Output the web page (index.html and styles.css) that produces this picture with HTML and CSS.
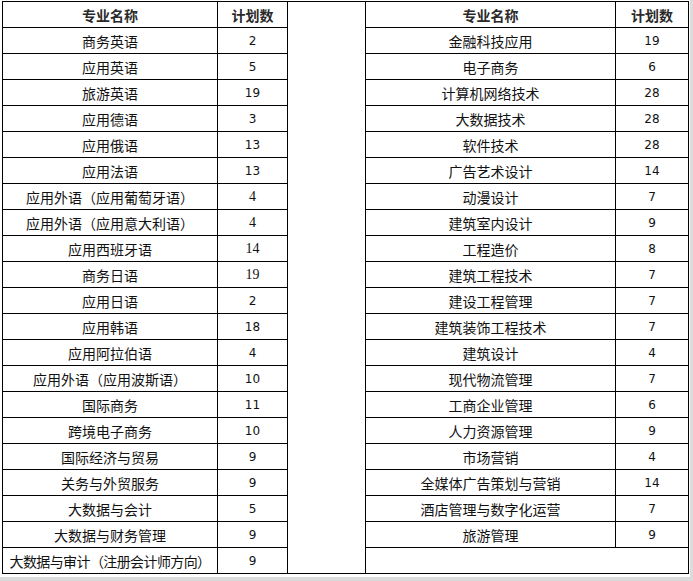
FILE: index.html
```html
<!DOCTYPE html>
<html lang="zh-CN">
<head>
<meta charset="utf-8">
<title>专业计划数</title>
<link rel="stylesheet" href="styles.css">
</head>
<body>
<div class="page">
<table class="plan">
<colgroup>
<col class="c-name-l"><col class="c-num-l"><col class="c-gap"><col class="c-name-r"><col class="c-num-r">
</colgroup>
<tbody>
<tr class="head"><th>专业名称</th><th>计划数</th><td class="gap" rowspan="22"></td><th>专业名称</th><th>计划数</th></tr>
<tr><td>商务英语</td><td class="n">2</td><td>金融科技应用</td><td class="n">19</td></tr>
<tr><td>应用英语</td><td class="n">5</td><td>电子商务</td><td class="n">6</td></tr>
<tr><td>旅游英语</td><td class="n">19</td><td>计算机网络技术</td><td class="n">28</td></tr>
<tr><td>应用德语</td><td class="n">3</td><td>大数据技术</td><td class="n">28</td></tr>
<tr><td>应用俄语</td><td class="n">13</td><td>软件技术</td><td class="n">28</td></tr>
<tr><td>应用法语</td><td class="n">13</td><td>广告艺术设计</td><td class="n">14</td></tr>
<tr><td>应用外语（应用葡萄牙语）</td><td class="n s">4</td><td>动漫设计</td><td class="n">7</td></tr>
<tr><td>应用外语（应用意大利语）</td><td class="n s">4</td><td>建筑室内设计</td><td class="n">9</td></tr>
<tr><td>应用西班牙语</td><td class="n s">14</td><td>工程造价</td><td class="n">8</td></tr>
<tr><td>商务日语</td><td class="n s">19</td><td>建筑工程技术</td><td class="n">7</td></tr>
<tr><td>应用日语</td><td class="n">2</td><td>建设工程管理</td><td class="n">7</td></tr>
<tr><td>应用韩语</td><td class="n">18</td><td>建筑装饰工程技术</td><td class="n">7</td></tr>
<tr><td>应用阿拉伯语</td><td class="n">4</td><td>建筑设计</td><td class="n">4</td></tr>
<tr><td>应用外语（应用波斯语）</td><td class="n">10</td><td>现代物流管理</td><td class="n">7</td></tr>
<tr><td>国际商务</td><td class="n">11</td><td>工商企业管理</td><td class="n">6</td></tr>
<tr><td>跨境电子商务</td><td class="n">10</td><td>人力资源管理</td><td class="n">9</td></tr>
<tr><td>国际经济与贸易</td><td class="n">9</td><td>市场营销</td><td class="n">4</td></tr>
<tr><td>关务与外贸服务</td><td class="n">9</td><td>全媒体广告策划与营销</td><td class="n">14</td></tr>
<tr><td>大数据与会计</td><td class="n">5</td><td>酒店管理与数字化运营</td><td class="n">7</td></tr>
<tr><td>大数据与财务管理</td><td class="n">9</td><td>旅游管理</td><td class="n">9</td></tr>
<tr><td class="tight">大数据与审计（注册会计师方向）</td><td class="n">9</td><td colspan="2"></td></tr>
</tbody>
</table>
</div>
</body>
</html>
```

FILE: styles.css
```css
html, body {
  margin: 0;
  padding: 0;
}
body {
  background: #dcdcdc;
  width: 693px;
  height: 581px;
  overflow: hidden;
}
.page {
  width: 690px;
  height: 577px;
  background: #ffffff;
  padding: 1px 0 0 2px;
  box-sizing: border-box;
}
.plan {
  border-collapse: collapse;
  table-layout: fixed;
  width: 687px;
  font-family: "Noto Sans CJK SC", "DejaVu Sans", sans-serif;
  font-size: 14px;
  color: #111;
}
.c-name-l { width: 215px; }
.c-num-l { width: 70px; }
.c-gap { width: 78px; }
.c-name-r { width: 250px; }
.c-num-r { width: 73px; }
.plan th,
.plan td {
  border: 1px solid #000;
  padding: 0;
  text-align: center;
  vertical-align: middle;
  line-height: 16px;
  white-space: nowrap;
  overflow: hidden;
}
.plan tr {
  height: 26px;
}
.plan tr.head {
  height: 26px;
}
.plan th {
  font-weight: bold;
  color: #2a2a2a;
}
.plan td.n {
  font-family: "DejaVu Sans", "Noto Sans", sans-serif;
  font-size: 12px;
}
.plan td.n.s {
  font-family: "Liberation Serif", serif;
  font-size: 14px;
}
.plan td.tight {
  letter-spacing: -0.6px;
}
.plan td.gap {
  background: #fff;
}
```
